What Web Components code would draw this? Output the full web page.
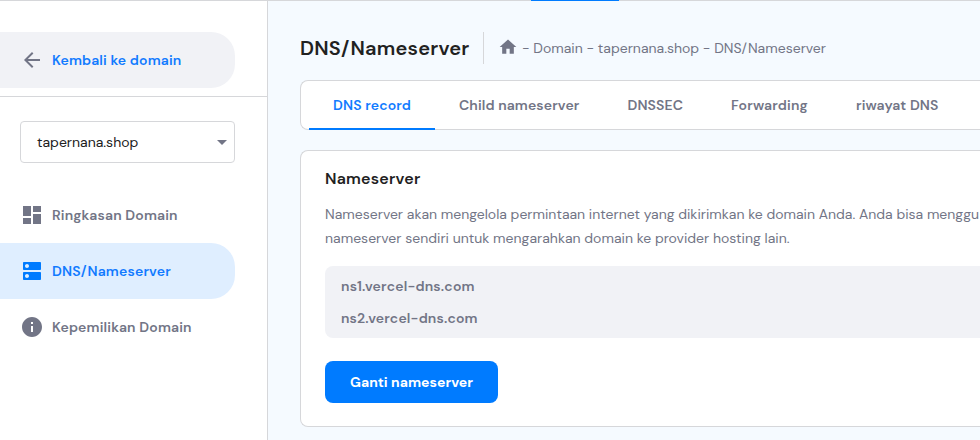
<!DOCTYPE html>
<html lang="id">
<head>
<meta charset="utf-8">
<title>DNS/Nameserver</title>
<style>
html, body { margin: 0; height: 100%; overflow: hidden; }
body { font: 14px/24px "DM Sans", Inter, "Open Sans", sans-serif; color: #727586; background: #f5faff; }
</style>
</head>
<body>
<domain-app></domain-app>
<script>
const define = (name, html, setup) => {
  const template = document.createElement('template');
  template.innerHTML = html;
  customElements.define(name, class extends HTMLElement {
    connectedCallback() {
      if (this.shadowRoot) return;
      this.attachShadow({ mode: 'open' }).append(template.content.cloneNode(true));
      if (setup) setup(this, this.shadowRoot);
    }
  });
};

/* One line of text, tracked so that it fills its nominal width. */
define('ui-text', `<style>
  :host { display: inline-block; white-space: nowrap; flex: none; }
  span { display: inline-block; }
</style><span></span>`, (el, root) => {
  const span = root.querySelector('span');
  span.textContent = el.getAttribute('text');
  const w = parseFloat(el.getAttribute('w'));
  const natural = span.getBoundingClientRect().width;
  el.style.width = w + 'px';
  span.style.letterSpacing = ((w - natural) / span.textContent.length).toFixed(4) + 'px';
});

const icons = {
  back: 'M20 11H7.83l5.59-5.59L12 4l-8 8 8 8 1.41-1.41L7.83 13H20z',
  dashboard: 'M3 13h8V3H3zm0 8h8v-6H3zm10 0h8V11h-8zm0-18v6h8V3z',
  dns: 'M20 13H4c-.55 0-1 .45-1 1v6c0 .55.45 1 1 1h16c.55 0 1-.45 1-1v-6c0-.55-.45-1-1-1zM7 19c-1.1 0-2-.9-2-2s.9-2 2-2 2 .9 2 2-.9 2-2 2zM20 3H4c-.55 0-1 .45-1 1v6c0 .55.45 1 1 1h16c.55 0 1-.45 1-1V4c0-.55-.45-1-1-1zM7 9c-1.1 0-2-.9-2-2s.9-2 2-2 2 .9 2 2-.9 2-2 2z',
  info: 'M12 2C6.48 2 2 6.48 2 12s4.48 10 10 10 10-4.48 10-10S17.52 2 12 2zm1 15h-2v-6h2zm0-8h-2V7h2z',
  home: 'M10 20v-6h4v6h5v-8h3L12 3 2 12h3v8z',
  caret: 'M7 10l5 5 5-5z'
};
define('ui-icon', `<style>
  :host { display: block; flex: none; width: 24px; height: 24px; color: #727586; }
  svg { display: block; width: 100%; height: 100%; fill: currentColor; }
</style><svg viewBox="0 0 24 24"><path/></svg>`, (el, root) => {
  root.querySelector('path').setAttribute('d', icons[el.getAttribute('name')]);
});

define('nav-item', `<style>
  :host { display: flex; align-items: center; gap: 8px; box-sizing: border-box; width: 235px; height: 56px;
    padding-left: 20px; border-radius: 0 24px 24px 0; font-weight: 600; }
  :host([back]) { background: #f1f2f6; color: #127bff; }
  :host([active]) { background: #dfeeff; color: #127bff; }
  :host([active]) ui-icon { color: #007bff; }
</style><ui-icon></ui-icon><slot></slot>`, (el, root) => {
  const old = root.querySelector('ui-icon');
  const icon = document.createElement('ui-icon');
  icon.setAttribute('name', el.getAttribute('icon'));
  old.replaceWith(icon);
});

define('domain-select', `<style>
  :host { display: flex; align-items: center; justify-content: space-between; box-sizing: border-box;
    width: 215px; height: 42px; margin: 24px 0 24px 20px; padding: 0 0 0 16px;
    border: 1px solid #d6d7da; border-radius: 4px; background: #fff; color: #212121; }
</style><slot></slot><ui-icon name="caret"></ui-icon>`);

define('side-bar', `<style>
  :host { display: block; box-sizing: border-box; flex: none; width: 268px; height: 100%; background: #fff; border-right: 1px solid #d6d7da; }
  header { padding: 31px 0 8px; border-bottom: 1px solid #d6d7da; }
</style>
<header><nav-item back icon="back"><ui-text w="129.4" text="Kembali ke domain"></ui-text></nav-item></header>
<domain-select><ui-text w="101.3" text="tapernana.shop"></ui-text></domain-select>
<nav>
<nav-item icon="dashboard"><ui-text w="125.7" text="Ringkasan Domain"></ui-text></nav-item>
<nav-item active icon="dns"><ui-text w="118.9" text="DNS/Nameserver"></ui-text></nav-item>
<nav-item icon="info"><ui-text w="139.7" text="Kepemilikan Domain"></ui-text></nav-item>
</nav>`);

define('page-heading', `<style>
  :host { display: flex; align-items: center; height: 32px; }
  h1 { margin: 0; box-sizing: border-box; width: 184px; height: 32px; border-right: 1px solid #d6d7da; font-size: 20px; line-height: 32px; font-weight: 600; color: #212121; }
  ui-icon { width: 20px; height: 20px; margin: 0 4px 2px 14px; }
  ui-text { font-size: 14px; }
  h1 ui-text { font-size: 20px; }
</style>
<h1><ui-text w="169.5" text="DNS/Nameserver"></ui-text></h1>
<ui-icon name="home"></ui-icon>
<ui-text w="304" text="- Domain - tapernana.shop - DNS/Nameserver"></ui-text>`);

define('tab-item', `<style>
  :host { display: flex; align-items: center; box-sizing: border-box; height: 50px; padding: 0 24px; font-weight: 600; border-bottom: 2px solid transparent; border-top: 2px solid transparent; }
  :host([active]) { color: #127bff; border-bottom-color: #007bff; }
</style><slot></slot>`);

define('tab-bar', `<style>
  :host { display: flex; box-sizing: border-box; height: 50px; border: 1px solid #d6d7da; border-right: 0; border-radius: 8px 0 0 8px; background: #fff; margin-top: 16px; padding-left: 8px; }
  ::slotted(tab-item) { margin-top: -1px; flex: none; }
</style><slot></slot>`);

define('name-servers', `<style>
  :host { display: flex; flex-direction: column; box-sizing: border-box; height: 72px; margin: 16px 0 23px; padding: 4px 16px; border-radius: 8px 0 0 8px; background: #f1f2f6; font-weight: 600; line-height: 32px; }
</style><slot></slot>`);

define('primary-button', `<style>
  :host { display: block; }
  button { display: flex; align-items: center; justify-content: center; width: 173px; height: 42px; padding: 0; border: 0; border-radius: 8px; background: #007bff; color: #fff; font: inherit; font-weight: 700; }
</style><button><slot></slot></button>`);

define('content-card', `<style>
  :host { display: block; box-sizing: border-box; height: 277px; margin-top: 20px; padding: 16px 0 0 24px; border: 1px solid #d6d7da; border-right: 0; border-radius: 8px 0 0 8px; background: #fff; overflow: hidden; }
  h2 { margin: 0 0 11px; font-size: 16px; line-height: 24px; font-weight: 600; color: #212121; }
  p { margin: 0; height: 48px; line-height: 24px; }
  p ui-text { display: block; }
</style>
<h2><ui-text w="95.5" text="Nameserver"></ui-text></h2>
<p><ui-text w="654" text="Nameserver akan mengelola permintaan internet yang dikirimkan ke domain Anda. Anda bisa menggu"></ui-text>
<ui-text w="464.5" text="nameserver sendiri untuk mengarahkan domain ke provider hosting lain."></ui-text></p>
<name-servers><ui-text w="133.7" text="ns1.vercel-dns.com"></ui-text><ui-text w="136.7" text="ns2.vercel-dns.com"></ui-text></name-servers>
<primary-button><ui-text w="123" text="Ganti nameserver"></ui-text></primary-button>`);

define('domain-app', `<style>
  :host { display: flex; flex-direction: column; height: 440px; width: 980px; overflow: hidden; }
  .top { flex: none; height: 1px; background: #d6d7da; }
  .top div { width: 88px; height: 1px; margin-left: 531px; background: #007bff; }
  .body { display: flex; flex: 1; min-height: 0; }
  main { flex: 1; min-width: 0; padding: 31px 0 0 32px; }
</style>
<div class="top"><div></div></div>
<div class="body">
<side-bar></side-bar>
<main>
<page-heading></page-heading>
<tab-bar>
<tab-item active><ui-text w="78" text="DNS record"></ui-text></tab-item>
<tab-item><ui-text w="120.5" text="Child nameserver"></ui-text></tab-item>
<tab-item><ui-text w="55.5" text="DNSSEC"></ui-text></tab-item>
<tab-item><ui-text w="77" text="Forwarding"></ui-text></tab-item>
<tab-item><ui-text w="82.5" text="riwayat DNS"></ui-text></tab-item>
</tab-bar>
<content-card></content-card>
</main>
</div>`);
</script>
</body>
</html>
